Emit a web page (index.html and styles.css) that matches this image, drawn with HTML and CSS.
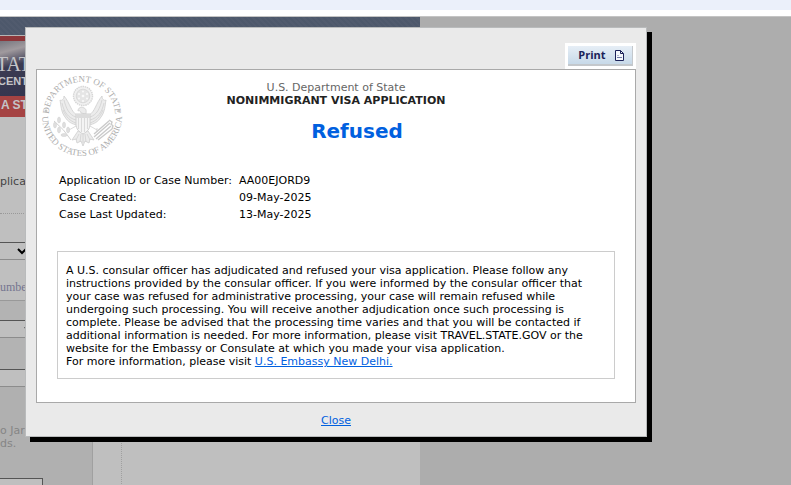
FILE: index.html
```
<!DOCTYPE html>
<html lang="en">
<head>
    <meta charset="UTF-8">
    <title>Visa Status Check</title>
    <link rel="stylesheet" href="styles.css">
</head>
<body>
    <div class="browser-bar"></div>
    <div class="viewport">
        <div class="page">
            <div class="site">
                <div class="topbar"></div>
                <header class="banner">
                    <div class="banner-name">TAT</div>
                    <div class="banner-center">CENT</div>
                    <div class="banner-title">A ST</div>
                </header>
                <div class="columns">
                    <form class="status-form">
                        <p class="intro">plicat</p>
                        <div class="row location">
                            <select aria-label="Location"><option></option></select>
                        </div>
                        <label class="number-label" for="caseNumber">umbe</label>
                        <div class="row type">
                            <select aria-label="Case type"><option></option></select>
                        </div>
                        <div class="row number">
                            <input type="text" id="caseNumber">
                        </div>
                        <p class="note">o Jar<br>ds.</p>
                        <input class="code" type="text" aria-label="Code">
                    </form>
                    <div class="gutter"></div>
                </div>
            </div>
        </div>

        <div class="modal" role="dialog" aria-label="Visa status">
            <div class="toolbar">
                <button class="print" type="button">
                    Print
                    <svg width="9" height="11" viewBox="0 0 9 11" fill="none" stroke="#1b2259">
                        <path d="M.5 .5h5l3 3v7h-8z" fill="#f4f8fc"/>
                        <path d="M5.5 .5v3h3"/>
                        <path d="M2.500 5.500h1M2 7.500h5" stroke="#7079a5"/>
                    </svg>
                </button>
            </div>
            <div class="panel">
                <svg class="seal" width="92" height="92" viewBox="0 0 92 92">
                    <defs>
                        <path id="arcTop" d="M12 46a33 33 0 0 1 66 0"/>
                        <path id="arcBottom" d="M5 47a40 40 0 0 0 80 0"/>
                    </defs>
                    <g class="seal-text">
                        <text font-size="9"><textPath href="#arcTop" startOffset="50%" text-anchor="middle">DEPARTMENT OF STATE</textPath></text>
                        <text font-size="9"><textPath href="#arcBottom" startOffset="50%" text-anchor="middle">UNITED STATES OF AMERICA</textPath></text>
                    </g>
                    <g fill="#c4c4c4">
                        <circle cx="9" cy="42" r="1.4"/>
                        <circle cx="82" cy="42" r="1.4"/>
                    </g>
                    <!-- glory with stars -->
                    <circle cx="46" cy="27" r="9.5" fill="#f1f1f1" stroke="#d6d6d6" stroke-width="1.4" stroke-dasharray="1.5 .7"/>
                    <circle cx="46" cy="27" r="6.8" fill="#e5e5e5" stroke="#dadada"/>
                    <g fill="#fafafa">
                        <circle cx="46" cy="22.5" r="1"/><circle cx="50" cy="25" r="1"/><circle cx="50" cy="29.5" r="1"/>
                        <circle cx="46" cy="32" r="1"/><circle cx="42" cy="29.5" r="1"/><circle cx="42" cy="25" r="1"/><circle cx="46" cy="27" r="1.3"/>
                    </g>
                    <!-- wings and tail -->
                    <g fill="#ececec" stroke="#d3d3d3" stroke-width=".9">
                        <path d="M40 46C34 43 33 34 27 27c0 4-3 5-4 4 1 5 1 12 5 17 3 5 7 7 12 8z"/>
                        <path d="M52 46C58 43 59 34 65 27c0 4 3 5 4 4-1 5-1 12-5 17-3 5-7 7-12 8z"/>
                        <path d="M41 62l-6 9 4-1 1 4 4-2 2 5 2-5 4 2 1-4 4 1-6-9z"/>
                        <path d="M44 44c0-2-2-3-3-2 0-3 3-5 6-3 3 1 2 4 2 6z"/>
                    </g>
                    <g fill="none" stroke="#d0d0d0" stroke-width=".8">
                        <path d="M27 31c2 8 5 15 12 17M25 34c2 9 6 15 14 17M26 41c3 7 7 11 13 13M65 31c-2 8-5 15-12 17M67 34c-2 9-6 15-14 17M66 41c-3 7-7 11-13 13"/>
                        <path d="M42 65l-3 6M44 65l-1 8M46 65v9M48 65l1 8M50 65l3 6M39 57l-7 4M53 57l7 4M32 59v4M60 59v4"/>
                    </g>
                    <path d="M39 45h14v10c0 5-3 8-7 10-4-2-7-5-7-10z" fill="#f7f7f7" stroke="#d0d0d0"/>
                    <path d="M39 45h14v4H39z" fill="#dcdcdc"/>
                    <path d="M41.5 49v11M44.5 49v14M47.5 49v14M50.5 49v11" stroke="#dadada" stroke-width="1.2"/>
                    <!-- olive branch -->
                    <path d="M17 52q10 8 17 19" fill="none" stroke="#d2d2d2"/>
                    <g fill="#dedede" stroke="#d0d0d0" stroke-width=".5">
                        <ellipse cx="18" cy="56" rx="1.5" ry="3"/><ellipse cx="22" cy="51" rx="1.5" ry="3"/>
                        <ellipse cx="22" cy="61" rx="1.5" ry="3"/><ellipse cx="27" cy="56" rx="1.5" ry="3"/>
                        <ellipse cx="27" cy="66" rx="3" ry="1.5"/><ellipse cx="31" cy="61" rx="1.5" ry="3"/>
                    </g>
                    <!-- arrows -->
                    <path d="M57 68l16-14M59 70l15-13M61 71l14-11M72 51l3 2-1 3M74 55l2 2-1 3M57 65l15-13" fill="none" stroke="#cacaca" stroke-width="1.4"/>
                </svg>
                <div class="heading">
                    <div class="department">U.S. Department of State</div>
                    <div class="application">NONIMMIGRANT VISA APPLICATION</div>
                </div>
                <h1 class="status">Refused</h1>
                <table class="case">
                    <tr>
                        <th scope="row">Application ID or Case Number:</th>
                        <td>AA00EJORD9</td>
                    </tr>
                    <tr>
                        <th scope="row">Case Created:</th>
                        <td>09-May-2025</td>
                    </tr>
                    <tr>
                        <th scope="row">Case Last Updated:</th>
                        <td>13-May-2025</td>
                    </tr>
                </table>
                <div class="message">
                    A U.S. consular officer has adjudicated and refused your visa application. Please follow any instructions provided by the consular officer. If you were informed by the consular officer that your case was refused for administrative processing, your case will remain refused while undergoing such processing. You will receive another adjudication once such processing is complete. Please be advised that the processing time varies and that you will be contacted if additional information is needed. For more information, please visit TRAVEL.STATE.GOV or the website for the Embassy or Consulate at which you made your visa application.<br>
                    For more information, please visit <a href="#">U.S. Embassy New Delhi.</a>
                </div>
            </div>
            <div class="footer"><a href="#">Close</a></div>
        </div>
    </div>
</body>
</html>
```
FILE: styles.css
```
* {
    box-sizing: border-box;
}
body {
    margin: 0;
    height: 100vh;
    display: flex;
    flex-direction: column;
    overflow: hidden;
    font-family: Verdana, "DejaVu Sans", sans-serif;
    font-size: 11px;
    line-height: 13px;
    color: #000;
}
a {
    color: #0060df;
}
.browser-bar {
    flex: none;
    height: 16px;
    background: #ebf0fa;
    border-bottom: 6px solid #fff;
}
.viewport {
    position: relative;
    flex: 1;
    min-height: 0;
    border-top: 1px solid #c4c4c4;
    background: #adadad;
}

/* dimmed page behind the dialog */
.page {
    height: 100%;
    overflow: hidden;
}
.site {
    width: 420px;
    min-height: 100%;
    display: flex;
    flex-direction: column;
    background: #bfbfbf;
}
.topbar {
    height: 19px;
    background: repeating-linear-gradient(45deg, #4d586b 0, #4d586b 2px, #515b6e 2px, #515b6e 4px);
    border-bottom: 1px solid #b5b5b5;
}
.banner {
    height: 81px;
    width: 93px;
    border-top: 5px solid #8d363a;
    background: linear-gradient(165deg, #77777f 0, #a09a9e 12%, #3b3b52 28%, #2c2e4b 100%);
    color: #c4c4c8;
    overflow: hidden;
}
.banner-name {
    margin: 12px 0 0 -4px;
    font: 20px/22px "Liberation Serif", serif;
}
.banner-center {
    margin-left: -2px;
    font: bold 11px/12px "Liberation Sans", sans-serif;
}
.banner-title {
    margin-top: 9px;
    padding-left: 1px;
    height: 21px;
    background: #a54343;
    font: bold 12px/19px "Liberation Sans", sans-serif;
}
.columns {
    flex: 1;
    display: flex;
}
.status-form {
    width: 93px;
    border-right: 1px solid #a0a0a0;
}
.gutter {
    width: 29px;
    border-right: 1px dotted #a0a0a0;
}
.intro {
    margin: 0;
    padding: 58px 0 25px;
    border-bottom: 1px dotted #999;
    color: #444;
}
.status-form select,
.status-form input {
    display: block;
    width: 31px;
    height: 18px;
    margin: 0;
    border: 1px solid #8c8c8c;
    border-top-color: #555;
    border-left: 0;
    border-radius: 0;
    background: #bfbfbf;
}
.location {
    margin-top: 28px;
}
.number-label {
    display: block;
    padding: 20px 0 5px;
    border-bottom: 1px solid #999;
    font: 12px/15px "Liberation Serif", serif;
    color: #74748f;
}
.type {
    padding: 19px 0 31px;
    background: #b3b3b3;
}
.status-form .type select {
    width: 38px;
}
.number {
    background: #b3b3b3;
}
.note {
    margin: 0;
    padding: 37px 0 28px;
    background: #b0b0b0;
    color: #858585;
}
.status-form .code {
    width: 43px;
    border-right-color: #555;
    box-shadow: 0 0 0 50px #b0b0b0;
    clip-path: inset(0 -49px -20px 0);
}

/* dialog */
.modal {
    position: absolute;
    top: 10px;
    left: 25px;
    right: 144px;
    padding: 15px 10px 9px;
    background: #eaeaea;
    border: 1px solid #b9bbbc;
    box-shadow: 5px 5px 0 #000;
}
.toolbar {
    display: flex;
    justify-content: flex-end;
}
.print {
    display: flex;
    align-items: center;
    justify-content: center;
    gap: 9px;
    width: 71px;
    height: 26px;
    padding: 0 2px 2px 3px;
    border: 3px solid #fff;
    background: linear-gradient(#e6eef6, #c4d7e7);
    box-shadow: inset -1px -2px 0 #c4c8cc;
    color: #1b2259;
    font: bold 11px/16px "Open Sans", sans-serif;
}
.panel {
    position: relative;
    padding: 11px 20px 23px;
    background: #fff;
    border: 1px solid #a9a9a9;
}
.seal {
    position: absolute;
    top: -1px;
    left: 0;
}
.seal-text {
    fill: #adadad;
    font-family: "Liberation Serif", serif;
}
.heading {
    text-align: center;
}
.department {
    color: #666;
}
.application {
    font-weight: bold;
    color: #222;
}
.status {
    margin: 12px 0 29px;
    padding-left: 42px;
    font-size: 20px;
    line-height: 24px;
    text-align: center;
    color: #0060df;
}
.case {
    border-collapse: collapse;
    margin-bottom: 28px;
}
.case th,
.case td {
    padding: 2px;
    text-align: left;
    font-weight: normal;
}
.case th {
    width: 180px;
    white-space: nowrap;
}
.message {
    padding: 12px 20px 10px 8px;
    border: 1px solid #ccc;
}
.footer {
    margin-top: 11px;
    text-align: center;
}
```
